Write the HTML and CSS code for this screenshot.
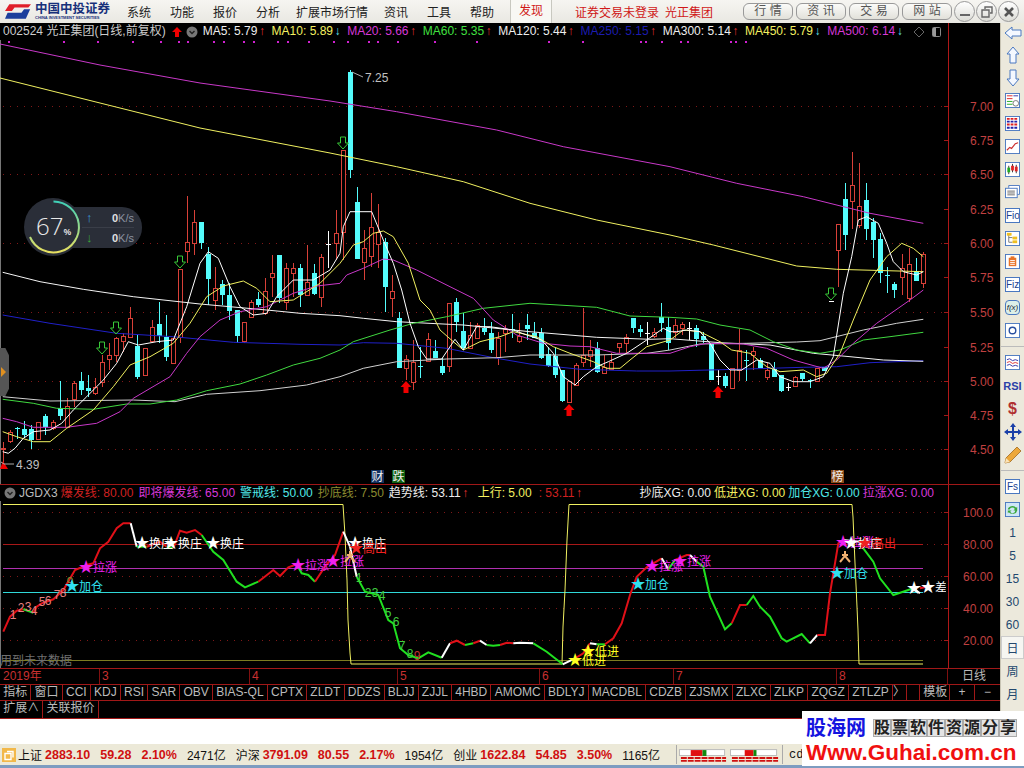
FILE: index.html
```html
<!DOCTYPE html>
<html lang="zh-CN">
<head>
  <meta charset="UTF-8">
  <title>光正集团 日线</title>
  <link rel="stylesheet" href="styles.css">
</head>
<body>
<div class="app">

  <div class="titlebar">
    <div class="logo">
      <svg width="26" height="17" viewBox="0 0 30 17">
        <polygon points="5,0 30,0 27,4 11,4 8,8 0,8" fill="#e0202a"/>
        <polygon points="3,10 19,10 22,6 29,6 24,17 0,17" fill="#1c3f9c"/>
      </svg>
      <div class="logo-text">
        <div class="logo-cn">中国中投证券</div>
        <div class="logo-en">CHINA INVESTMENT SECURITIES</div>
      </div>
    </div>
    <nav class="menu">
      <span>系统</span><span>功能</span><span>报价</span><span>分析</span><span class="menu-wide">扩展市场行情</span><span>资讯</span><span>工具</span><span>帮助</span>
    </nav>
    <div class="discover">发现</div>
    <div class="login"><span>证券交易未登录</span><span>光正集团</span></div>
    <div class="quick">
      <span>行 情</span><span>资 讯</span><span>交 易</span><span>网 站</span>
    </div>
    <div class="winbtns">
      <span class="winbtn"><svg width="12" height="12" viewBox="0 0 12 12"><rect x="1" y="8" width="10" height="2" fill="#666"/></svg></span>
      <span class="winbtn"><svg width="12" height="12" viewBox="0 0 12 12"><path d="M4 3V1h7v6H9M1 4h7v7H1z" fill="none" stroke="#666" stroke-width="1.4"/></svg></span>
      <span class="winbtn"><svg width="12" height="12" viewBox="0 0 12 12"><path d="M2 2l8 8M10 2l-8 8" stroke="#555" stroke-width="2.6"/></svg></span>
    </div>
  </div>

  <div class="workspace">
    <div class="charts">
      <div class="legend">
        <div class="legend-main">
          <span class="stock">002524 光正集团(日线,前复权)</span>
          <svg class="up-mark" width="12" height="12" viewBox="0 0 12 12"><polygon points="6,1 11,6 8,6 8,11 4,11 4,6 1,6" fill="#f00000"/></svg>
          <svg class="chev" width="12" height="12" viewBox="0 0 12 12"><circle cx="6" cy="6" r="5.5" fill="#777"/><path d="M3.5 5l2.5 2.5L8.5 5" fill="none" stroke="#222" stroke-width="1.4"/></svg>
          <span class="ma white">MA5: 5.79<i class="up">↑</i></span>
          <span class="ma yellow">MA10: 5.89<i class="down">↓</i></span>
          <span class="ma magenta">MA20: 5.66<i class="up">↑</i></span>
          <span class="ma green">MA60: 5.35<i class="up">↑</i></span>
          <span class="ma white">MA120: 5.44<i class="up">↑</i></span>
          <span class="ma blue">MA250: 5.15<i class="up">↑</i></span>
          <span class="ma white">MA300: 5.14<i class="up">↑</i></span>
          <span class="ma yellow">MA450: 5.79<i class="down">↓</i></span>
          <span class="ma magenta">MA500: 6.14<i class="down">↓</i></span>
          <svg class="tools" width="28" height="12" viewBox="0 0 28 12"><path d="M6 1l5 5-5 5-5-5z" fill="none" stroke="#666"/><rect x="19.5" y="1.5" width="8" height="9" rx="1" fill="none" stroke="#888"/><rect x="20" y="2" width="3" height="8" fill="#999"/></svg>
        </div>
      </div>

      <svg id="mainPane" class="pane" width="1000" height="444" viewBox="0 40 1000 444"></svg>

      <div class="legend legend-sub">
        <div class="legend-main">
          <svg class="chev chev-sub" width="12" height="12" viewBox="0 0 12 12"><circle cx="6" cy="6" r="5.5" fill="#777"/><path d="M3.5 5l2.5 2.5L8.5 5" fill="none" stroke="#222" stroke-width="1.4"/></svg>
          <span class="ind grey name">JGDX3</span>
          <span class="ind red">爆发线: 80.00</span>
          <span class="ind magenta">即将爆发线: 65.00</span>
          <span class="ind cyan">警戒线: 50.00</span>
          <span class="ind olive">抄底线: 7.50</span>
          <span class="ind white">趋势线: 53.11<i class="up">↑</i></span>
          <span class="ind yellow rise">上行: 5.00</span>
          <span class="ind red wide">: 53.11<i class="up">↑</i></span>
          <span class="ind xg white push">抄底XG: 0.00</span>
          <span class="ind xg yellow">低进XG: 0.00</span>
          <span class="ind xg cyan">加仓XG: 0.00</span>
          <span class="ind xg magenta">拉涨XG: 0.00</span>
        </div>
      </div>

      <svg id="subPane" class="pane" width="1000" height="167" viewBox="0 501 1000 167"></svg>

      <div class="timeaxis">
        <span>2019年</span><span>3</span><span>4</span><span>5</span><span>6</span><span>7</span><span>8</span><span class="period">日线</span>
      </div>

      <div class="tabs">
        <span>指标</span><span>窗口</span><span>CCI</span><span>KDJ</span><span>RSI</span><span>SAR</span><span>OBV</span><span>BIAS-QL</span><span>CPTX</span><span>ZLDT</span><span>DDZS</span><span>BLJJ</span><span>ZJJL</span><span>4HBD</span><span>AMOMC</span><span>BDLYJ</span><span>MACDBL</span><span>CDZB</span><span>ZJSMX</span><span>ZLXC</span><span>ZLKP</span><span>ZQGZ</span><span>ZTLZP</span><span class="tab-more">〉</span><span class="tab-blank"></span>
        <span class="tab-tpl">模板</span><span class="tab-step">+</span><span class="tab-step">−</span>
      </div>
      <div class="tabs tabs-ext">
        <span>扩展∧</span><span>关联报价</span>
      </div>
    </div>

    <aside class="toolbar">
      <div class="tool tool-first"><svg width="18" height="14" viewBox="0 0 18 14"><path d="M1 7l7-6v3h9v6H8v3z" fill="#f4f8ff" stroke="#4a78c0"/></svg></div>
      <div class="tool"><svg width="14" height="18" viewBox="0 0 14 18"><path d="M7 1l6 7h-3v9H4V8H1z" fill="#f4f8ff" stroke="#4a78c0"/></svg></div>
      <div class="tool"><svg width="14" height="18" viewBox="0 0 14 18"><path d="M7 17l6-7h-3V1H4v9H1z" fill="#f4f8ff" stroke="#4a78c0"/></svg></div>
      <div class="tool"><svg class="ico" viewBox="0 0 16 16"><rect x=".5" y=".5" width="15" height="15" fill="#fff" stroke="#4a78c0"/><path d="M2 3h6M2 6h6" stroke="#d22"/><path d="M2 9h6M2 12h6" stroke="#2a2"/><path d="M9 3h5" stroke="#33a"/><circle cx="11.5" cy="11" r="3" fill="none" stroke="#777"/></svg></div>
      <div class="tool"><svg class="ico" viewBox="0 0 16 16"><rect x=".5" y=".5" width="15" height="15" fill="#fff" stroke="#4a78c0"/><path d="M2 3h12" stroke="#d22" stroke-width="2" stroke-dasharray="3 1"/><path d="M2 6h12" stroke="#22a" stroke-width="2" stroke-dasharray="3 1"/><path d="M2 9h12" stroke="#d22" stroke-width="2" stroke-dasharray="3 1"/><path d="M2 12.5h12" stroke="#22a" stroke-width="2" stroke-dasharray="3 1"/></svg></div>
      <div class="tool"><svg class="ico" viewBox="0 0 16 16"><rect x=".5" y=".5" width="15" height="15" fill="#fff" stroke="#4a78c0"/><path d="M2 12l3-3 2 1 4-5 3-1" fill="none" stroke="#c33" stroke-width="1.3"/></svg></div>
      <div class="tool"><svg class="ico" viewBox="0 0 16 16"><rect x=".5" y=".5" width="15" height="15" fill="#fff" stroke="#4a78c0"/><path d="M4 4v9M8 2v9M12 3v9" stroke="#333"/><rect x="2.5" y="6" width="3" height="5" fill="#2a2"/><rect x="6.5" y="4" width="3" height="5" fill="#d22"/><rect x="10.5" y="5" width="3" height="5" fill="#d22"/></svg></div>
      <div class="tool"><svg class="ico" viewBox="0 0 16 16"><path d="M4 3V.5h11.500V10H13" fill="#fff" stroke="#4a78c0"/><rect x=".5" y="3.5" width="12.5" height="10" fill="#fff" stroke="#4a78c0"/><path d="M2.500 6.500h8M2.500 8.500h8M2.500 10.500h8" stroke="#666"/></svg></div>
      <div class="tool"><span class="tbox">Fio</span></div>
      <div class="tool"><svg class="ico" viewBox="0 0 16 16"><rect x=".5" y=".5" width="15" height="15" fill="#fff" stroke="#4a78c0"/><path d="M4 4v8h4M4 7h4" fill="none" stroke="#777"/><rect x="2" y="2" width="5" height="3" fill="#f0c020"/><rect x="8" y="6" width="5" height="3" fill="#f0c020"/><rect x="8" y="10" width="5" height="3" fill="#f0c020"/></svg></div>
      <div class="tool"><svg class="ico" viewBox="0 0 16 16"><rect x=".5" y=".5" width="15" height="15" fill="#fff" stroke="#4a78c0"/><rect x="4" y="4" width="8" height="9" fill="#e8742a"/><rect x="6" y="2.5" width="4" height="2" fill="#e8742a"/><path d="M5.500 7h5M5.500 9h5M5.500 11h5" stroke="#fff"/></svg></div>
      <div class="tool"><span class="tbox">Fiz</span></div>
      <div class="tool"><span class="tbox tbox-fx">f(x)</span></div>
      <div class="tool tool-sep"><svg class="ico" viewBox="0 0 16 16"><rect x=".5" y=".5" width="15" height="15" fill="#fff" stroke="#4a78c0"/><circle cx="8" cy="8" r="3.5" fill="none" stroke="#2a50a0" stroke-width="1.5"/></svg></div>
      <div class="tool"><svg class="ico" viewBox="0 0 16 16"><rect x=".5" y=".5" width="15" height="15" fill="#fff" stroke="#4a78c0"/><path d="M2 5l3-1 3 2 3-1 3 1" fill="none" stroke="#33a"/><path d="M2 8l3-1 3 2 3-1 3 1" fill="none" stroke="#d33"/><path d="M2 11l3-1 3 2 3-1 3 1" fill="none" stroke="#33a"/></svg></div>
      <div class="tool"><span class="rsi">RSI</span></div>
      <div class="tool"><span class="dollar">$</span></div>
      <div class="tool"><svg width="18" height="18" viewBox="0 0 18 18"><path d="M9 0l3 4h-2v4h4V6l4 3-4 3v-2h-4v4h2l-3 4-3-4h2v-4H4v2L0 9l4-3v2h4V4H6z" fill="#1a3fa8"/></svg></div>
      <div class="tool tool-sep"><svg width="18" height="18" viewBox="0 0 18 18"><path d="M13 1l4 4L6 16l-5 1 1-5z" fill="#eda83a" stroke="#a06a20" stroke-width=".8"/><path d="M2 12l4 4-5 1z" fill="#fbe4b8"/></svg></div>
      <div class="tool"><span class="tbox">Fs</span></div>
      <div class="tool"><svg class="ico" viewBox="0 0 16 16"><rect x=".5" y=".5" width="15" height="15" fill="#cfe6f6" stroke="#4a78c0"/><path d="M3 8a5 4 0 0 1 9-2l1-1v4H9l1.500-1.500A3 3 0 0 0 5 8zM13 9a5 4 0 0 1-9 2l-1 1V9h4l-1.500 1.500A3 3 0 0 0 11 9z" fill="#3ca83c"/></svg></div>
      <div class="tool period-btn">1</div>
      <div class="tool period-btn">5</div>
      <div class="tool period-btn">15</div>
      <div class="tool period-btn">30</div>
      <div class="tool period-btn">60</div>
      <div class="tool period-btn period-on">日</div>
      <div class="tool period-btn">周</div>
      <div class="tool period-btn">月</div>
    </aside>
  </div>

  <div class="gap"></div>

  <div class="statusbar">
    <svg class="status-ico" width="14" height="14" viewBox="0 0 14 14"><rect width="14" height="14" fill="#f2b84a"/><path d="M5 3.500h6v6M3 5.500h6v6H3z" fill="none" stroke="#fff" stroke-width="1.4"/></svg>
    <span class="idx"><b class="nm">上证</b><em>2883.10</em><em>59.28</em><em>2.10%</em><span>2471亿</span></span>
    <span class="idx"><b class="nm">沪深</b><em>3791.09</em><em>80.55</em><em>2.17%</em><span>1954亿</span></span>
    <span class="idx"><b class="nm">创业</b><em>1622.84</em><em>54.85</em><em>3.50%</em><span>1165亿</span></span>
    <svg class="meters" width="107" height="19" viewBox="0 0 107 19">
      <rect x="2.5" y="4.5" width="46" height="6" fill="#fff" stroke="#bbb"/>
      <rect x="14" y="5" width="12" height="6" fill="#e01010"/><rect x="26" y="5" width="4" height="6" fill="#108a10"/>
      <rect x="54.5" y="4.5" width="47" height="6" fill="#fff" stroke="#bbb"/>
      <rect x="69" y="5" width="9" height="6" fill="#e01010"/><rect x="78" y="5" width="3" height="6" fill="#108a10"/>
      <path d="M4 13h46M4 16h46M56 13h47M56 16h47" stroke="#d01010" stroke-width="2" stroke-dasharray="6 1"/>
    </svg>
    <span class="user">cd</span>
  </div>

  <div class="edge"></div>

  <!-- floating bits -->
  <div class="netwidget">
    <div class="net-rows">
      <div class="net-row"><i class="net-up">↑</i><span><b>0</b>K/s</span></div>
      <div class="net-row"><i class="net-down">↓</i><span><b>0</b>K/s</span></div>
    </div>
    <div class="net-dial">
      <svg width="58" height="58" viewBox="0 0 58 58">
        <defs><linearGradient id="ring" x1="0" y1="0" x2="0" y2="1"><stop offset="0" stop-color="#3fd0b8"/><stop offset="1" stop-color="#e8e060"/></linearGradient></defs>
        <path d="M29.500 3.500A25.500 25.500 0 1 1 6 39" fill="none" stroke="url(#ring)" stroke-width="2"/>
      </svg>
      <span class="net-pct">67<small>%</small></span>
    </div>
  </div>
  <div class="handle"><i></i></div>

  <div class="watermark">
    <div class="wm-top">
      <span class="wm-name">股海网</span>
      <span class="wm-slogan"><i>股</i><i>票</i><i>软</i><i>件</i><i>资</i><i>源</i><i>分</i><i>享</i></span>
    </div>
    <div class="wm-url">Www.Guhai.com.cn</div>
  </div>
</div>
<script src="chart.js"></script>
</body>
</html>
```

FILE: styles.css
```css
* {
  box-sizing: border-box;
}
body {
  margin: 0;
  background: #000;
  font-family: "Liberation Sans", "Noto Sans CJK SC", sans-serif;
  font-size: 12px;
}
i, em {
  font-style: normal;
}
.app {
  position: relative;
  width: 1024px;
  height: 768px;
  overflow: hidden;
  display: flex;
  flex-direction: column;
  background: #fff;
}

/* title bar */
.titlebar {
  height: 23px;
  display: flex;
  align-items: center;
  background: linear-gradient(#f6f5f1, #e9e8e2);
  color: #222;
  font-size: 12px;
}
.logo {
  width: 122px;
  padding-left: 5px;
  display: flex;
  gap: 4px;
  flex: none;
}
.logo-text {
  line-height: 1;
}
.logo-cn {
  color: #17307a;
  font-size: 12.5px;
  font-weight: bold;
}
.logo-en {
  color: #17307a;
  font-size: 4px;
  font-weight: bold;
  white-space: nowrap;
  margin-top: 1px;
}
.menu {
  display: flex;
  gap: 19px;
  width: 388px;
  padding-left: 5px;
  flex: none;
}
.menu-wide {
  margin: 0 -3px;
}
.discover {
  width: 42px;
  height: 23px;
  line-height: 23px;
  text-align: center;
  color: #d01818;
  background: #f8f8f4;
  border-left: 1px solid #c8c8c0;
  border-right: 1px solid #c8c8c0;
  flex: none;
}
.login {
  color: #d01818;
  width: 191px;
  padding-left: 23px;
  display: flex;
  gap: 6px;
  white-space: nowrap;
  flex: none;
}
.quick {
  display: flex;
  gap: 3px;
  flex: none;
}
.quick span {
  width: 50px;
  height: 17px;
  line-height: 15px;
  text-align: center;
  color: #555;
  background: linear-gradient(#fbfbf9, #e2e1da);
  border: 1px solid #999;
  border-radius: 6px;
}
.winbtns {
  display: flex;
  gap: 1px;
  margin-left: 2px;
}
.winbtn {
  width: 21px;
  height: 21px;
  border: 1px solid #999;
  border-radius: 50%;
  background: linear-gradient(#fff, #dcdcd6);
  display: flex;
  align-items: center;
  justify-content: center;
}

/* chart column */
.workspace {
  display: flex;
  height: 696px;
}
.charts {
  width: 1000px;
  background: #000;
  flex: none;
  display: flex;
  flex-direction: column;
}
.pane {
  display: block;
  flex: none;
}
.legend {
  height: 17px;
  color: #ddd;
  display: flex;
  line-height: 17px;
  white-space: nowrap;
}
.legend-main {
  width: 949px;
  padding-left: 3px;
  display: flex;
  align-items: center;
  border-right: 1px solid #b01818;
}
.legend-sub {
  border-top: 1px solid #a01818;
}
.stock {
  color: #ccc;
}
.up-mark {
  margin-left: 5px;
}
.chev {
  margin: 0 5px 0 3px;
}
.chev-sub {
  margin: 0 3px 0 1px;
}
.ma {
  margin-right: 5.2px;
}
.ma i, .ind i {
  display: inline-block;
  width: 9px;
  text-align: center;
}
.tools {
  margin-left: 4px;
}
.ind {
  margin-right: 5px;
}
.ind.name {
  margin-right: 3px;
}
.ind.rise {
  margin-left: 3px;
}
.ind.wide {
  margin-left: 2px;
}
.ind.xg {
  margin-right: 3px;
}
.ind.push {
  margin-left: auto;
}
.ind.xg:last-child {
  margin-right: 14px;
}
.white { color: #eee; }
.grey { color: #bbb; }
.yellow { color: #f4f060; }
.magenta { color: #d838d8; }
.green { color: #40e040; }
.blue { color: #1c1cb0; }
.red { color: #d02020; }
.cyan { color: #50e8e8; }
.olive { color: #8c8c30; }
.up { color: #e83030; }
.down { color: #60e8f0; }

.timeaxis {
  height: 16px;
  display: grid;
  grid-template-columns: 100px 150px 148px 142px 134px 163px 111px 52px;
  border-top: 1px solid #a01818;
  color: #c83030;
  line-height: 15px;
}
.timeaxis span {
  padding-left: 2px;
  border-right: 1px solid #801010;
}
.timeaxis span:first-child {
  padding-left: 3px;
}
.timeaxis .period {
  color: #bbb;
  text-align: center;
  border-right: 0;
  padding-left: 0;
}
.tabs {
  height: 17px;
  display: flex;
  border-top: 1px solid #a01818;
  border-bottom: 1px solid #a01818;
  color: #bbb;
  line-height: 15px;
  white-space: nowrap;
}
.tabs span {
  padding: 0 3.2px;
  border-right: 1px solid #a01818;
  flex: none;
}
.tabs .tab-more {
  padding: 0;
  width: 14px;
}
.tabs .tab-blank {
  flex: 1;
  padding: 0;
}
.tabs .tab-tpl {
  width: 30px;
}
.tabs .tab-step {
  width: 25px;
  text-align: center;
}
.tabs .tab-step:last-child {
  border-right: 0;
}
.tabs-ext {
  height: 18px;
  border-top: 0;
}

/* right toolbar */
.toolbar {
  width: 24px;
  background: #ece9dc;
  display: flex;
  flex-direction: column;
  color: #2a4a78;
  flex: none;
  border-left: 1px solid #c8c4b4;
}
.tool {
  height: 23px;
  flex: none;
  display: flex;
  align-items: center;
  justify-content: center;
}
.tool-first {
  height: 20px;
}
.tool-sep {
  height: 28px;
  padding-bottom: 4px;
  margin-bottom: 4px;
  border-bottom: 1px solid #bbb;
}
.ico {
  width: 15px;
  height: 15px;
}
.tbox {
  width: 15px;
  height: 15px;
  border: 1px solid #4a78c0;
  background: #fff;
  color: #1c3f90;
  font-size: 10px;
  line-height: 13px;
  text-align: center;
  overflow: hidden;
}
.tbox-fx {
  border-radius: 4px;
  font-size: 8px;
  font-style: italic;
  background: #dcefe8;
  color: #123;
}
.rsi {
  color: #2a3fa8;
  font-weight: bold;
  font-size: 11px;
}
.dollar {
  color: #b03030;
  font-weight: bold;
  font-size: 16px;
}
.period-btn {
  font-size: 12px;
  color: #23486e;
}
.period-on {
  background: #f6f6f2;
  border: 1px solid #ccc;
}

.gap {
  height: 25px;
  background: #fff;
  flex: none;
}
.statusbar {
  height: 21px;
  background: #ece9d8;
  display: flex;
  align-items: center;
  padding-left: 2px;
  color: #111;
  white-space: nowrap;
  flex: none;
}
.status-ico {
  margin-right: 2px;
}
.idx {
  display: flex;
  align-items: center;
  gap: 10px;
  margin-right: 10px;
}
.idx .nm {
  font-weight: normal;
  margin-right: -7px;
}
.idx em {
  color: #d01010;
  font-weight: bold;
  font-size: 12.5px;
}
.meters {
  margin-left: 6px;
  border-left: 1px solid #aaa;
  border-right: 1px solid #aaa;
}
.user {
  margin-left: 6px;
  font-family: "Liberation Mono", monospace;
}
.edge {
  flex: 1;
  background: #7d9cc0;
}

/* over the chart */
.netwidget {
  position: absolute;
  left: 24px;
  top: 198px;
  width: 118px;
  height: 58px;
}
.net-rows {
  position: absolute;
  left: 29px;
  top: 9px;
  width: 89px;
  height: 41px;
  padding-right: 8px;
  background: #2a2e38;
  border-radius: 20px;
  display: flex;
  flex-direction: column;
  justify-content: center;
}
.net-row {
  height: 20px;
  line-height: 20px;
  display: flex;
  justify-content: space-between;
  padding-left: 33px;
  color: #8b93a0;
  font-size: 11px;
}
.net-row b {
  color: #e0e0e0;
}
.net-row:first-child {
  border-bottom: 1px solid #3a3e48;
}
.net-up {
  color: #3a9ad8;
  font-weight: bold;
  font-size: 13px;
}
.net-down {
  color: #38a838;
  font-weight: bold;
  font-size: 13px;
}
.net-dial {
  position: absolute;
  left: 0;
  top: 0;
  width: 58px;
  height: 58px;
  background: #2a2e38;
  border-radius: 50%;
}
.net-dial svg {
  position: absolute;
  left: 0;
  top: 0;
}
.net-pct {
  position: absolute;
  left: 12px;
  top: 12px;
  color: #e8e8e8;
  font-family: "Open Sans", sans-serif;
  font-size: 24px;
  font-weight: 300;
  line-height: 32px;
}
.net-pct small {
  font-size: 9px;
  font-weight: 600;
}
.handle {
  position: absolute;
  left: 0;
  top: 348px;
  width: 9px;
  height: 48px;
  background: #555;
  clip-path: polygon(0 0, 60% 0, 100% 15%, 100% 85%, 60% 100%, 0 100%);
}
.handle i {
  position: absolute;
  left: 1px;
  top: 19px;
  border-left: 5px solid #e09020;
  border-top: 5px solid transparent;
  border-bottom: 5px solid transparent;
}
.watermark {
  position: absolute;
  left: 802px;
  top: 711px;
  width: 222px;
  height: 55px;
  background: #fff;
  padding: 6px 0 0 4px;
}
.wm-top {
  display: flex;
  align-items: center;
  gap: 7px;
  height: 22px;
}
.wm-name {
  color: #1414e0;
  font-size: 20px;
  font-weight: bold;
  line-height: 22px;
}
.wm-slogan {
  display: flex;
}
.wm-slogan i {
  width: 18px;
  height: 18px;
  background: #e4e4e4;
  border: 1px solid #aaa;
  color: #222;
  font-size: 16px;
  font-weight: bold;
  line-height: 15px;
  text-align: center;
}
.wm-url {
  color: #f01010;
  font-size: 22.5px;
  font-weight: bold;
  line-height: 26px;
  margin-top: 1px;
  white-space: nowrap;
}
```

FILE: chart.js
```js
// screen coords. traces were read off in 3x crops, so most points carry an origin
const NS = "http://www.w3.org/2000/svg";
const CRED = "#d84038", CCYAN = "#54fcfc";

// [x, bodyTop, bodyBottom, high, low, kind]
const candles = [
  [3,448,449,442,463,"r"],[10,432,441,430,443,"r"],[17,428,429,427,439,"c"],[24,429,435,421,437,"c"],
  [31,429,440,425,449,"c"],[38,422,439,422,439,"r"],[45,416,427,414,435,"c"],[53,422,428,420,430,"r"],
  [60,408,416,381,420,"c"],[67,406,427,398,428,"r"],[74,383,399,381,407,"r"],[81,381,390,372,395,"c"],
  [88,388,391,375,397,"c"],[95,387,393,378,395,"r"],[102,362,382,355,387,"r"],[109,355,359,343,370,"r"],
  [116,338,355,337,362,"r"],[123,336,341,333,352,"r"],[130,318,337,307,337,"r"],[137,346,377,335,379,"c"],
  [145,348,375,348,375,"r"],[152,327,341,320,343,"r"],[159,324,336,302,343,"c"],[166,337,357,315,361,"c"],
  [173,338,363,338,363,"r"],[180,269,337,269,343,"r"],[187,242,251,196,263,"r"],[194,222,243,210,255,"r"],
  [201,222,243,222,249,"c"],[208,254,279,247,305,"c"],[215,288,300,267,310,"r"],[222,284,295,280,305,"c"],
  [229,295,311,283,320,"c"],[237,310,336,310,343,"c"],[244,322,341,322,343,"r"],[251,302,317,300,317,"r"],
  [258,299,305,292,307,"c"],[265,291,313,278,315,"r"],[272,273,277,255,297,"r"],[279,255,298,255,303,"c"],
  [286,268,302,263,310,"r"],[293,268,273,263,297,"r"],[300,268,295,264,307,"c"],[307,282,295,245,295,"r"],
  [314,273,294,264,295,"c"],[321,257,297,254,307,"r"],[328,244,245,231,268,"w"],[336,233,243,210,260,"r"],
  [343,150,232,150,260,"r"],[350,72,170,70,178,"c"],[357,202,259,187,259,"c"],[364,248,262,230,280,"r"],
  [371,227,256,193,267,"r"],[378,232,244,204,268,"r"],[385,242,287,238,312,"c"],[392,291,298,275,317,"r"],
  [399,318,368,312,368,"c"],[406,359,368,355,380,"r"],[413,362,382,340,390,"r"],[420,366,367,347,378,"c"],
  [428,339,361,333,362,"r"],[435,351,358,340,358,"c"],[442,366,373,358,375,"c"],[449,303,366,303,372,"r"],
  [456,302,322,298,332,"c"],[463,331,348,313,350,"c"],[470,335,348,322,348,"r"],[477,325,338,323,338,"r"],
  [484,328,332,318,335,"c"],[491,333,350,322,353,"c"],[498,338,357,332,365,"r"],[505,329,333,325,352,"r"],
  [512,329,330,314,338,"c"],[519,336,341,323,343,"r"],[527,325,329,314,340,"c"],[534,333,338,322,338,"c"],
  [541,333,358,328,359,"c"],[548,354,366,347,367,"c"],[555,356,375,348,378,"c"],[562,370,401,370,402,"c"],
  [569,381,402,381,402,"r"],[576,365,385,363,385,"r"],[583,355,362,308,367,"r"],[590,350,356,340,367,"r"],
  [597,348,372,342,373,"c"],[604,367,373,355,373,"r"],[611,362,369,353,370,"r"],[619,343,347,343,353,"r"],
  [626,337,343,334,353,"r"],[633,318,328,318,333,"c"],[640,329,332,325,337,"c"],[647,333,334,322,345,"w"],
  [654,332,336,328,338,"r"],[661,317,323,303,332,"c"],[668,327,343,317,350,"c"],[675,325,332,319,338,"r"],
  [682,324,328,322,335,"r"],[689,328,329,322,340,"w"],[696,328,339,325,347,"c"],[703,336,340,332,343,"c"],
  [711,343,380,343,380,"c"],[718,376,377,370,385,"w"],[725,376,386,373,388,"c"],[732,368,388,368,388,"r"],
  [739,350,370,329,381,"r"],[746,360,361,350,381,"c"],[753,351,355,347,370,"r"],[760,360,368,358,368,"c"],
  [767,370,377,363,380,"r"],[774,369,377,362,377,"c"],[781,375,391,375,392,"c"],[788,387,388,383,391,"w"],
  [795,377,386,376,386,"r"],[802,373,379,373,381,"c"],[810,380,381,379,388,"c"],[817,368,381,368,381,"r"],
  [824,367,371,367,371,"c"],[831,301,302,301,302,"w"],[838,224,250,224,287,"r"],[845,199,235,183,250,"c"],
  [852,185,201,152,229,"r"],[859,206,225,163,228,"r"],[866,200,229,183,240,"c"],[873,222,240,218,258,"c"],
  [880,239,273,233,283,"c"],[887,275,276,267,293,"c"],[894,284,290,282,298,"c"],[902,268,277,254,295,"r"],
  [909,264,298,248,302,"r"],[916,271,281,258,281,"c"],[923,254,283,252,288,"r"]
];

// moving averages, each part is [originX, originY, scale, points...]
const mas = [
  ["#c838c8", [[0,0,1,[0,44,100,65,200,83,330,101]],[330,60,3,[200,155,500,210,700,260,1020,320]],[670,140,3,[200,130,400,170,600,220,760,250]]]],
  ["#f0f060", [[0,0,1,[0,78,100,103,200,128,330,153]],[330,60,3,[200,320,400,365,600,430,800,480,1020,525]],[670,140,3,[130,315,380,378,500,388,760,395]]]],
  ["#2020c8", [[0,180,3,[8,405,150,430,350,460,520,470,700,487,900,493,1020,495]],[330,60,3,[100,848,200,850,350,865,500,895,600,912,750,928,920,933,1020,933]],[670,140,3,[200,688,400,682,500,680,600,668,760,662]]]],
  ["#f4f4f4", [[0,180,3,[8,277,120,305,250,328,400,350,600,372,800,390,900,400,1020,407]],[330,60,3,[100,775,200,785,400,795,600,815,800,832,960,838,1020,836]],[670,140,3,[150,608,300,615,430,640,540,650,640,660,760,664]]]],
  ["#d0d0d0", [[0,180,3,[8,650,150,663,400,660,525,665,620,643,780,632,920,615,1020,590]],[330,60,3,[100,925,200,905,350,897,500,893,600,885,800,885,950,880,1020,870]],[670,140,3,[90,612,230,610,380,606,450,602,580,570,680,550,760,538]]]],
  ["#40d840", [[0,180,3,[8,658,100,670,170,685,280,688,380,672,450,672,530,660,620,632,720,612,800,585,880,555,960,535,1020,510]],[330,60,3,[70,845,180,810,250,790,350,770,460,745,600,730,800,742,900,768,1020,772]],[670,140,3,[80,537,150,555,240,570,310,605,380,630,450,640,510,630,580,600,660,590,760,577]]]],
  ["#c838c8", [[0,180,3,[8,715,50,725,100,742,200,742,290,730,360,695,400,655,510,590,560,520,600,470,660,420,720,395,800,380,880,340,950,318,1020,310]],[330,60,3,[50,645,100,625,160,597,190,600,260,630,360,680,430,715,490,780,560,825,640,850,720,858,780,860,860,880,1020,880]],[670,140,3,[60,620,110,610,220,612,290,625,370,660,460,685,500,660,550,610,620,550,720,480,760,450]]]],
  ["#f0f060", [[0,180,3,[8,755,50,770,100,785,150,785,200,745,280,690,340,620,390,555,450,530,520,490,570,430,620,350,670,318,730,303,770,325,810,365,880,360,960,310,1020,250]],[330,60,3,[70,555,100,545,130,520,160,513,190,530,235,610,270,720,300,750,330,810,370,845,400,870,450,845,510,830,550,815,620,830,670,860,720,880,790,905,830,925,870,925,900,900,950,860,1020,840]],[670,140,3,[40,570,90,575,150,605,185,630,240,640,290,680,330,695,400,690,440,710,470,700,510,640,550,540,600,420,650,350,695,310,730,325,760,350]]]],
  ["#ffffff", [[0,180,3,[8,815,25,820,45,805,70,775,100,755,150,750,185,730,220,690,260,650,310,600,350,550,385,485,415,495,470,485,520,480,560,380,600,250,625,215,655,235,690,320,720,380,760,405,800,400,830,350,880,300,940,300,990,270,1020,220]],[330,60,3,[40,500,60,455,125,455,160,540,190,610,215,690,240,790,265,860,290,897,335,897,375,838,400,870,440,800,480,800,550,810,590,825,635,840,670,880,700,950,735,975,760,950,800,920,835,905,890,880,950,840,1000,805,1020,815]],[670,140,3,[20,575,50,570,90,575,120,610,150,660,180,690,215,690,260,660,300,670,330,710,370,725,420,725,460,710,490,650,520,460,545,350,565,240,590,230,625,250,650,310,670,365,700,395,740,405,760,395]]]]
];

// indicator line, z10 starts at x=0, z11 at x=480, both y=480 and 3x
const z10 = [
  ["r",[10,455,30,410,50,392,70,388]],["g",[70,388,100,398]],
  ["r",[100,398,110,380,125,370,160,358,190,330,225,270,260,255,280,250,300,205,325,185,350,145,370,130,392,130]],
  ["w",[392,130,410,200]],["g",[410,200,440,200]],["r",[440,200,480,185,500,200]],["g",[500,200,520,205]],
  ["r",[520,205,540,152,560,158,585,150,605,165]],["g",[605,165,640,215,670,240,710,305,735,322,775,305]],
  ["r",[775,305,820,270,840,288,865,262,890,253]],["g",[890,253,905,280,925,285,945,305]],
  ["r",[945,305,975,260,1005,225,1030,155]],["w",[1030,155,1050,200,1070,290]],
  ["g",[1070,290,1095,335,1135,345,1165,420,1180,430,1200,505,1225,525,1255,535,1285,517,1325,533]],
  ["w",[1325,533,1350,490]],["r",[1350,490,1370,482,1395,495]],["g",[1395,495,1420,490]],["r",[1420,490,1440,482]]
];
const z11 = [
  ["w",[0,482,20,495]],["g",[20,495,40,497,60,495]],["r",[60,495,80,488,100,490]],["w",[100,490,120,488,160,490]],
  ["g",[160,490,200,515,248,553]],["w",[248,553,285,535]],["r",[285,535,310,520,330,490]],["w",[330,490,350,493]],
  ["g",[350,493,375,493]],["r",[375,493,400,475,425,430,450,345,470,290,500,262,545,235]],["w",[545,235,565,268]],
  ["g",[565,268,585,240]],["r",[585,240,620,225,630,225]],["w",[630,225,650,245]],
  ["g",[650,245,670,260,690,350,735,448,755,430]],["r",[755,430,780,375,800,375]],
  ["g",[800,375,820,348,840,380,870,410,905,475,920,485,965,462,990,490]],["w",[990,490,1012,465]],
  ["r",[1012,465,1035,465,1050,340,1075,190,1090,180]],["w",[1090,180,1140,185]],["r",[1140,185,1150,205]],
  ["g",[1150,205,1180,245,1200,295,1240,345,1285,330,1300,325]],["w",[1300,325,1320,340]],["r",[1320,325,1340,320]]
];
const LINE = { r: "#e01018", g: "#20e020", w: "#ffffff" };

// stars in screen px: x, y, colour, label
const PINK = "#f020f0", SKY = "#30e0f0", WH = "#ffffff", YE = "#ffff20", RD = "#f02020";
const stars = [
  [72,586,SKY,"加仓"],[86,567,PINK,"拉涨"],[142,543,WH,"换庄"],[171,543,WH,"换庄"],[213,543,WH,"换庄"],
  [298,565,PINK,"拉涨"],[333,561,PINK,"拉涨"],[355,543,WH,"换庄"],[356,548,RD,"高出"],
  [575,660,YE,"低进"],[588,651,YE,"低进"],[638,584,SKY,"加仓"],[652,566,PINK,"拉涨"],[680,561,PINK,"拉涨"],
  [837,573,SKY,"加仓"],[843,542,PINK,"拉涨"],[851,543,WH,"换庄"],[865,543,RD,"高出"],[914,588,WH,""],[928,587,WH,"差"]
];
const nums = [
  [13,619,"1","#e88080"],[21,612,"2","#e88080"],[28,611,"3","#e88080"],[34,615,"4","#e88080"],[42,606,"5","#e88080"],
  [48,605,"6","#e88080"],[57,599,"7","#e88080"],[63,597,"8","#e88080"],[70,586,"9","#8c8c30"],
  [359,582,"1","#40d040"],[368,597,"2","#40d040"],[375,597,"3","#40d040"],[382,600,"4","#40d040"],[388,617,"5","#40d040"],
  [396,626,"6","#40d040"],[402,650,"7","#40d040"],[410,658,"8","#40d040"],[417,660,"9","#c03030"]
];

function el(parent, name, attrs, text) {
  const n = document.createElementNS(NS, name);
  for (const k in attrs) n.setAttribute(k, attrs[k]);
  if (text !== undefined) n.textContent = text;
  parent.appendChild(n);
  return n;
}
function rect(p, x, y, w, h, fill) {
  return el(p, "rect", { x, y, width: w, height: h, fill, "shape-rendering": "crispEdges" });
}
function merge(parts) {
  const out = [];
  let maxX = -1;
  for (const [ox, oy, s, pts] of parts) {
    for (let i = 0; i < pts.length; i += 2) {
      const x = ox + pts[i] / s, y = oy + pts[i + 1] / s;
      if (x > maxX) { out.push(x.toFixed(1) + "," + y.toFixed(1)); maxX = x; }
    }
  }
  return out.join(" ");
}
function downArrow(p, x, y) {
  el(p, "path", { d: `M${x} ${y + 7}l-5.5 -6h3v-6h5v6h3z`, fill: "none", stroke: "#38c838" });
}
function upArrow(p, x, y) {
  el(p, "path", { d: `M${x} ${y - 6}l5.5 6h-3v6h-5v-6h-3z`, fill: "#f00000" });
}

// main pane
const main = document.getElementById("mainPane");
rect(main, 0, 40, 1000, 444, "#000");
rect(main, 0, 40, 1, 444, "#777");

const magentaDots = [8,63,97,132,160,178,187,213,223,243,253,277,287,308,333,347,368,377,397,434,476,548,582,640,645,661,680,687,730,735,745];
magentaDots.forEach(x => rect(main, x, 41, 2, 2, "#d020d0"));

[
  [106,"7.00",1],[140,"6.75",0],[174,"6.50",1],[209,"6.25",0],[243,"6.00",1],[277,"5.75",0],
  [312,"5.50",1],[347,"5.25",0],[381,"5.00",1],[415,"4.75",0],[449,"4.50",1]
].forEach(([y, label, dotted]) => {
  if (dotted) el(main, "line", { x1: 3, y1: y + .5, x2: 948, y2: y + .5, stroke: "#801818", "stroke-dasharray": "1 6", "shape-rendering": "crispEdges" });
  rect(main, 944, y, 5, 1, "#a01818");
  el(main, "text", { x: 970, y: y + 5, fill: "#c04040", "font-size": 12 }, label);
});
rect(main, 948, 40, 1, 444, "#b01818");

candles.forEach(([x, top, bot, hi, lo, kind]) => {
  const col = kind === "r" ? CRED : kind === "c" ? CCYAN : "#fff";
  if (hi < top) rect(main, x, hi, 1, top - hi, col);
  if (lo > bot) rect(main, x, bot, 1, lo - bot, col);
  if (kind === "r") {
    el(main, "rect", { x: x - 1.5, y: top + .5, width: 4, height: bot - top, fill: "#000", stroke: col, "shape-rendering": "crispEdges" });
  } else {
    rect(main, x - 2, top, 5, Math.max(bot - top, 1), col);
  }
});
mas.forEach(([color, parts]) => {
  el(main, "polyline", { points: merge(parts), fill: "none", stroke: color, "stroke-width": 1 });
});

[[102,347],[116,327],[180,261],[343,142],[831,293]].forEach(([x, y]) => downArrow(main, x, y));
[[406,387],[569,410],[718,392]].forEach(([x, y]) => upArrow(main, x, y));
el(main, "polygon", { points: "3,461 8,469 0,469", fill: "#f00000" });
el(main, "polyline", { points: "14,464 4,464 1,462", fill: "none", stroke: "#aaa" });
el(main, "text", { x: 16, y: 469, fill: "#c0c0c0", "font-size": 12 }, "4.39");
el(main, "polyline", { points: "352,72 363,77", fill: "none", stroke: "#aaa" });
el(main, "text", { x: 365, y: 82, fill: "#c0c0c0", "font-size": 12 }, "7.25");

[[371,"财","#123060"],[392,"跌","#106010"],[831,"榜","#8a4a18"]].forEach(([x, t, bg]) => {
  rect(main, x, 470, 13, 13, bg);
  el(main, "text", { x: x + .5, y: 481, fill: "#f0f0f0", "font-size": 12 }, t);
});

// sub pane
const sub = document.getElementById("subPane");
rect(sub, 0, 501, 1000, 167, "#000");
rect(sub, 0, 501, 1, 167, "#777");
[[512,"100.0"],[544,"80.00"],[576,"60.00"],[608,"40.00"],[640,"20.00"]].forEach(([y, label]) => {
  el(sub, "line", { x1: 3, y1: y + .5, x2: 948, y2: y + .5, stroke: "#801818", "stroke-dasharray": "1 6", "shape-rendering": "crispEdges" });
  rect(sub, 944, y, 5, 1, "#a01818");
  el(sub, "text", { x: 963, y: y + 5, fill: "#c04040", "font-size": 12 }, label);
});
rect(sub, 948, 501, 1, 167, "#b01818");

[[544.5,"#a81818"],[568.5,"#b030b0"],[592.5,"#30d8d8"],[660.5,"#7c7c20"]].forEach(([y, c]) => {
  el(sub, "line", { x1: 3, y1: y, x2: 923, y2: y, stroke: c, "shape-rendering": "crispEdges" });
});
el(sub, "polyline", {
  points: "3,504.5 343,504.5 345,535 347,580 348,620 350,653 351,664 562,664 563,627 565,590 567,540 569,504.5 852,504.5 853,517 855,563 857,607 858,630 859,664 923,664",
  fill: "none", stroke: "#f0f060", "stroke-width": 1
});
const drawSegs = (segs, ox) => segs.forEach(([k, pts]) => {
  const p = [];
  for (let i = 0; i < pts.length; i += 2) p.push((ox + pts[i] / 3).toFixed(1) + "," + (480 + pts[i + 1] / 3).toFixed(1));
  el(sub, "polyline", { points: p.join(" "), fill: "none", stroke: LINE[k], "stroke-width": 2 });
});
drawSegs(z10, 0);
drawSegs(z11, 480);

el(sub, "text", { x: 0, y: 665, fill: "#707070", "font-size": 12 }, "用到未来数据");
nums.forEach(([x, y, t, c]) => el(sub, "text", { x, y, fill: c, "font-size": 12, "text-anchor": "middle" }, t));

const clip = el(el(sub, "defs", {}), "clipPath", { id: "subClip" });
el(clip, "rect", { x: 0, y: 501, width: 946, height: 167 });
const marks = el(sub, "g", { "clip-path": "url(#subClip)" });
stars.forEach(([x, y, c, label]) => {
  el(marks, "text", { x, y: y + 6, fill: c, "font-size": 18, "text-anchor": "middle", "font-family": "DejaVu Sans" }, "★");
  if (label) el(marks, "text", { x: x + 7, y: y + 5, fill: c, "font-size": 12 }, label);
});
[350, 845].forEach(x => {
  el(sub, "path", { d: `M${x} 551v5l-5 6M${x} 556l5 6M${x - 3} 555h6`, fill: "none", stroke: "#f0b070", "stroke-width": 2 });
});
```
